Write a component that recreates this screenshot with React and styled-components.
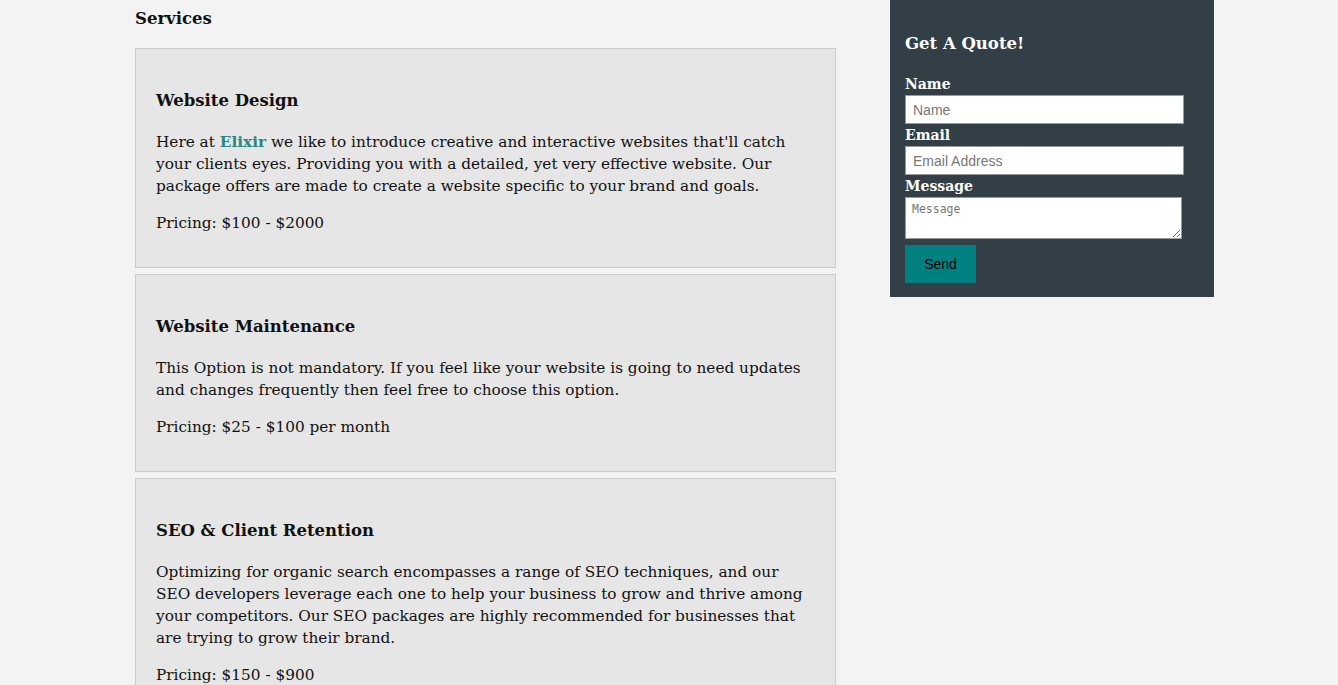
import React from "react";
import styled, { createGlobalStyle } from "styled-components";

const GlobalStyle = createGlobalStyle`
  body {
    margin: 0;
    background-color: #f3f3f3;
    font-family: "DejaVu Serif", "Liberation Serif", serif;
    color: #111;
  }
`;

const Page = styled.div`
  display: flex;
  align-items: flex-start;
  gap: 54px;
  padding-left: 135px;
  height: 685px;
  overflow: hidden;
`;

const Main = styled.main`
  width: 701px;
`;

const PageTitle = styled.h2`
  font-size: 16.5px;
  font-weight: bold;
  line-height: 24px;
  margin: 7px 0 17px;
`;

const Card = styled.section`
  background-color: #e6e6e6;
  border: 1px solid #cccccc;
  padding: 20px;
  margin-bottom: 6px;
`;

const CardTitle = styled.h3`
  font-size: 16.5px;
  font-weight: bold;
  line-height: 24px;
  margin: 20px 0 18px;
`;

const Text = styled.p`
  font-size: 15.3px;
  line-height: 22px;
  margin: 15px 0;

  &:last-child {
    margin-bottom: 13px;
  }
`;

const Brand = styled.a`
  color: #2b8781;
  font-weight: bold;
  text-decoration: none;
`;

const Sidebar = styled.aside`
  width: 324px;
  box-sizing: border-box;
  background-color: #333f47;
  padding: 15px 15px 14px;
  color: #ffffff;
`;

const QuoteTitle = styled.h3`
  font-size: 16.5px;
  font-weight: bold;
  line-height: 24px;
  margin: 17px 0 17px;
`;

const Form = styled.form`
  display: flex;
  flex-direction: column;
  align-items: flex-start;
`;

const Label = styled.label`
  font-size: 14px;
  font-weight: bold;
  line-height: 22px;
`;

const Input = styled.input`
  width: 279px;
  height: 29px;
  box-sizing: border-box;
  border: 1px solid #999;
  padding: 0 7px;
  margin: 0;
  font-family: "Liberation Sans", Arial, sans-serif;
  font-size: 14px;
  &::placeholder {
    color: #777;
  }
`;

const TextArea = styled.textarea`
  width: 277px;
  height: 42px;
  box-sizing: border-box;
  border: 1px solid #999;
  padding: 4px 6px;
  margin: 0;
  font-family: "DejaVu Sans Mono", "Liberation Mono", monospace;
  font-size: 11.5px;
  &::placeholder {
    color: #777;
  }
`;

const SendButton = styled.button`
  width: 71px;
  height: 38px;
  margin-top: 6px;
  border: none;
  background-color: #008080;
  color: #000;
  font-family: "Liberation Sans", Arial, sans-serif;
  font-size: 14px;
  cursor: pointer;
`;

const services = [
  {
    title: "Website Design",
    body: (
      <>
        Here at <Brand href="#">Elixir</Brand> we like to introduce creative and
        interactive websites that'll catch your clients eyes. Providing you with a
        detailed, yet very effective website. Our package offers are made to create
        a website specific to your brand and goals.
      </>
    ),
    price: "Pricing: $100 - $2000",
  },
  {
    title: "Website Maintenance",
    body:
      "This Option is not mandatory. If you feel like your website is going to need updates and changes frequently then feel free to choose this option.",
    price: "Pricing: $25 - $100 per month",
  },
  {
    title: "SEO & Client Retention",
    body:
      "Optimizing for organic search encompasses a range of SEO techniques, and our SEO developers leverage each one to help your business to grow and thrive among your competitors. Our SEO packages are highly recommended for businesses that are trying to grow their brand.",
    price: "Pricing: $150 - $900",
  },
];

const App = () => {
  return (
    <>
      <GlobalStyle />
      <Page>
        <Main>
          <PageTitle>Services</PageTitle>
          {services.map((s) => (
            <Card key={s.title}>
              <CardTitle>{s.title}</CardTitle>
              <Text>{s.body}</Text>
              <Text>{s.price}</Text>
            </Card>
          ))}
        </Main>
        <Sidebar>
          <QuoteTitle>Get A Quote!</QuoteTitle>
          <Form onSubmit={(e) => e.preventDefault()}>
            <Label htmlFor="name">Name</Label>
            <Input id="name" type="text" placeholder="Name" />
            <Label htmlFor="email">Email</Label>
            <Input id="email" type="email" placeholder="Email Address" />
            <Label htmlFor="message">Message</Label>
            <TextArea id="message" placeholder="Message" />
            <SendButton type="submit">Send</SendButton>
          </Form>
        </Sidebar>
      </Page>
    </>
  );
};

export default App;
